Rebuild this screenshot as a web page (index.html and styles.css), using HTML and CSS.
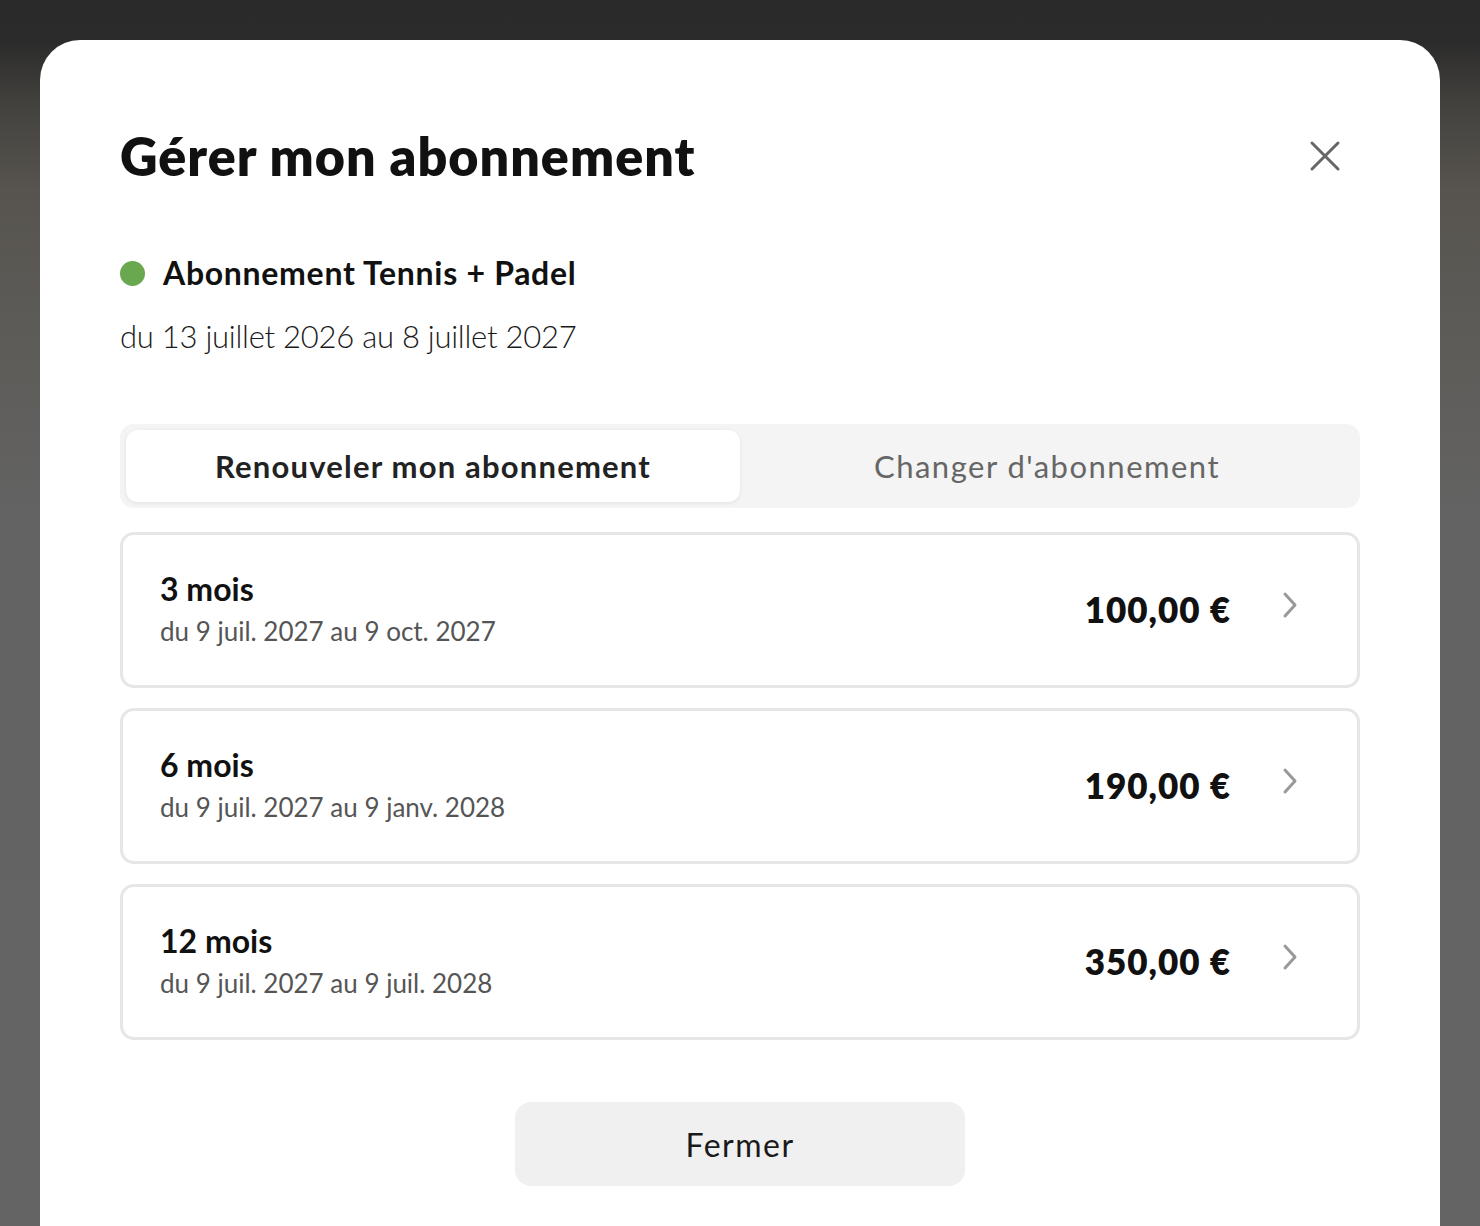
FILE: index.html
```html
<!DOCTYPE html>
<html lang="fr">
<head>
  <meta charset="UTF-8">
  <meta name="viewport" content="width=device-width, initial-scale=1.0">
  <title>Gérer mon abonnement</title>
  <link rel="stylesheet" href="styles.css">
</head>
<body>
  <div class="backdrop">
    <div class="modal">
      <div class="modal-header">
        <h1>Gérer mon abonnement</h1>
        <button class="close-button" aria-label="Fermer">
          <svg width="32" height="32" viewBox="0 0 32 32" fill="none" stroke="#666" stroke-width="3" stroke-linecap="round">
            <path d="M3 3 L29 29 M29 3 L3 29"/>
          </svg>
        </button>
      </div>

      <div class="current-plan">
        <span class="status-dot"></span>
        <span class="plan-name">Abonnement Tennis + Padel</span>
      </div>
      <p class="plan-dates">du 13 juillet 2026 au 8 juillet 2027</p>

      <div class="tabs">
        <button class="tab active">Renouveler mon abonnement</button>
        <button class="tab">Changer d'abonnement</button>
      </div>

      <div class="offers">
        <div class="offer">
          <div class="offer-info">
            <div class="offer-title">3 mois</div>
            <div class="offer-dates">du 9 juil. 2027 au 9 oct. 2027</div>
          </div>
          <div class="offer-price">100,00 €</div>
          <svg class="chevron" width="18" height="28" viewBox="0 0 18 28" fill="none" stroke="#999" stroke-width="3" stroke-linecap="round" stroke-linejoin="round">
            <path d="M4 3 L14 14 L4 25"/>
          </svg>
        </div>
        <div class="offer">
          <div class="offer-info">
            <div class="offer-title">6 mois</div>
            <div class="offer-dates">du 9 juil. 2027 au 9 janv. 2028</div>
          </div>
          <div class="offer-price">190,00 €</div>
          <svg class="chevron" width="18" height="28" viewBox="0 0 18 28" fill="none" stroke="#999" stroke-width="3" stroke-linecap="round" stroke-linejoin="round">
            <path d="M4 3 L14 14 L4 25"/>
          </svg>
        </div>
        <div class="offer">
          <div class="offer-info">
            <div class="offer-title">12 mois</div>
            <div class="offer-dates">du 9 juil. 2027 au 9 juil. 2028</div>
          </div>
          <div class="offer-price">350,00 €</div>
          <svg class="chevron" width="18" height="28" viewBox="0 0 18 28" fill="none" stroke="#999" stroke-width="3" stroke-linecap="round" stroke-linejoin="round">
            <path d="M4 3 L14 14 L4 25"/>
          </svg>
        </div>
      </div>

      <div class="modal-footer">
        <button class="close-secondary">Fermer</button>
      </div>
    </div>
  </div>
</body>
</html>
```

FILE: styles.css
```css
* {
  box-sizing: border-box;
}
html, body {
  margin: 0;
  height: 100%;
}
body {
  font-family: Lato, "Noto Sans", sans-serif;
  color: #111;
  overflow: hidden;
  background: linear-gradient(180deg, #2a2a2a 0, #2b2b2b 40px, #45433f 110px, #57544f 190px, #5d5b57 320px, #636363 520px, #646464 100%);
}
button {
  font-family: inherit;
  border: none;
  background: none;
  cursor: pointer;
}

.backdrop {
  padding: 40px 40px 0;
  height: 100%;
}
.modal {
  background: #ffffff;
  border-radius: 40px 40px 0 0;
  padding: 80px 80px 40px;
  min-height: 100%;
}

.modal-header {
  display: flex;
  justify-content: space-between;
  align-items: center;
}
.modal-header h1 {
  margin: 0;
  font-size: 52px;
  font-weight: 800;
  line-height: 72px;
  letter-spacing: 1px;
}
.close-button {
  padding: 0;
  margin-right: 19px;
  width: 32px;
  height: 32px;
}

.current-plan {
  display: flex;
  align-items: center;
  gap: 18px;
  margin-top: 61px;
}
.status-dot {
  width: 25px;
  height: 25px;
  border-radius: 50%;
  background: #6aa84f;
}
.plan-name {
  font-size: 32px;
  font-weight: 700;
  line-height: 40px;
  letter-spacing: 0.7px;
}
.plan-dates {
  margin: 23px 0 0;
  font-size: 31px;
  font-weight: 300;
  line-height: 40px;
  letter-spacing: -0.25px;
  color: #1a1a1a;
}

.tabs {
  display: flex;
  margin-top: 68px;
  padding: 6px;
  background: #f4f4f4;
  border-radius: 14px;
}
.tab {
  flex: 1;
  height: 72px;
  font-size: 31px;
  font-weight: 400;
  letter-spacing: 1.5px;
  color: #666;
  border-radius: 12px;
}
.tab.active {
  background: #ffffff;
  color: #222;
  font-weight: 700;
  letter-spacing: 1.2px;
  box-shadow: 0 1px 4px rgba(0, 0, 0, 0.08);
}

.offers {
  display: flex;
  flex-direction: column;
  gap: 20px;
  margin-top: 24px;
}
.offer {
  display: flex;
  align-items: center;
  height: 156px;
  padding: 0 58px 0 37px;
  border: 3px solid #e6e6e6;
  border-radius: 14px;
}
.offer-info {
  flex: 1;
  margin-bottom: 3px;
}
.offer-title {
  font-size: 32px;
  font-weight: 700;
  line-height: 40px;
}
.offer-dates {
  margin-top: 5px;
  font-size: 26px;
  font-weight: 400;
  line-height: 34px;
  color: #555;
}
.offer-price {
  font-size: 35px;
  font-weight: 800;
  letter-spacing: 1px;
  margin-right: 50px;
  margin-bottom: 3px;
}
.chevron {
  margin-bottom: 10px;
}

.modal-footer {
  display: flex;
  justify-content: center;
  margin-top: 62px;
}
.close-secondary {
  width: 450px;
  height: 84px;
  background: #f0f0f0;
  border-radius: 16px;
  font-size: 32px;
  letter-spacing: 1.5px;
  color: #1a1a1a;
}
```
